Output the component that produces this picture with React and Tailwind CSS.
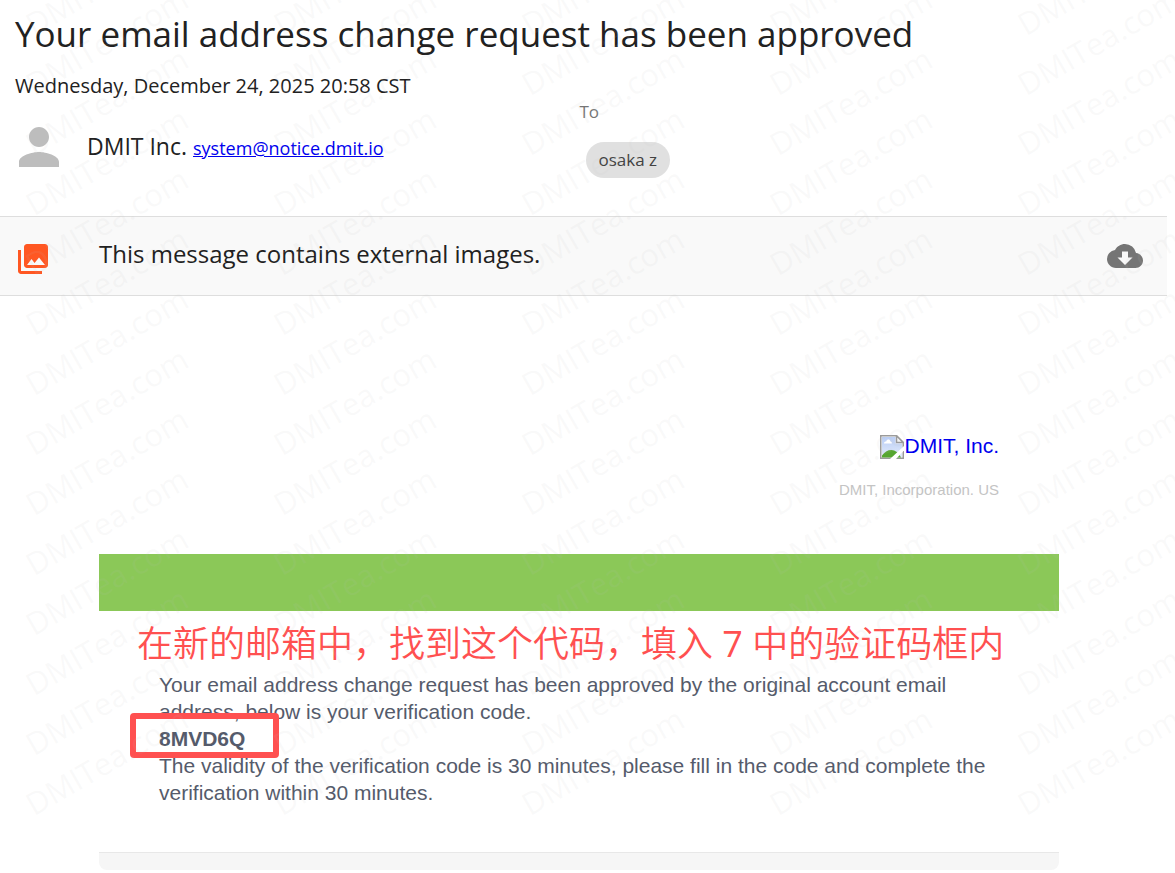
import React from 'react';
import { MdPerson, MdPhotoLibrary, MdCloudDownload } from 'react-icons/md';

const WATERMARK_ROWS = 14;
const WATERMARK_COLS = 5;

function Watermark() {
  return (
    <div aria-hidden="true" className="pointer-events-none absolute inset-0 z-10 overflow-hidden">
      <div className="grid auto-rows-[60px] grid-cols-[repeat(5,248px)] pt-1 pl-9">
        {Array.from({ length: WATERMARK_ROWS * WATERMARK_COLS }, (_, i) => (
          <div key={i} className="flex h-9 items-end">
            <span className="origin-bottom-left -rotate-30 text-[31px] leading-8 font-medium text-[#c0c0c0]/10 select-none">
              DMITea.com
            </span>
          </div>
        ))}
      </div>
    </div>
  );
}

function BrokenImage() {
  return (
    <svg viewBox="0 0 24 24" className="size-6 shrink-0" aria-hidden="true">
      <defs>
        <linearGradient id="sky" x1="0" y1="0" x2="0" y2="1">
          <stop offset="0" stopColor="#b9cdf5" />
          <stop offset="1" stopColor="#e3ebfb" />
        </linearGradient>
      </defs>
      <path d="M0.75 0.75H16.5L23.25 7.5V23.25H0.75Z" fill="#fff" stroke="#9a9a9a" strokeWidth="1.5" />
      <path d="M2 2H15.5V8.5H22V22H2Z" fill="url(#sky)" />
      <path d="M4 8.5C4 6.8 5.6 6.4 6.2 6.6C6.8 4 10 4 10.4 6.4C11.8 6.4 12 7.6 11.8 8.5Z" fill="#fff" />
      <path d="M2 22.5V20.5C4.5 17 7.5 15 11.5 15C15 15 19 18 21 22.5Z" fill="#55a630" />
      <path d="M16.5 0.75V7.5H23.25Z" fill="#f4f4f4" stroke="#9a9a9a" strokeWidth="1.5" />
      <path d="M10 24L24 11V15.5L16 24Z" fill="#fff" />
    </svg>
  );
}

function MessageHeader() {
  return (
    <header className="px-[15px] pt-3">
      <h1 className="text-[35px] leading-[44px]">Your email address change request has been approved</h1>
      <p className="mt-4 text-[20px] leading-7">Wednesday, December 24, 2025 20:58 CST</p>
      <div className="grid grid-cols-2">
        <div className="flex items-center gap-[18px] self-start pt-[17px]">
          <MdPerson className="-ml-1.5 size-[60px] text-[#bdbdbd]" />
          <p className="text-[23px] leading-8">
            DMIT Inc.{' '}
            <a href="mailto:system@notice.dmit.io" className="text-[18px] text-[#0000ee] underline">
              system@notice.dmit.io
            </a>
          </p>
        </div>
        <div className="-ml-2">
          <p className="text-[17px] leading-6 text-[#757575]">To</p>
          <button className="mt-[18px] ml-1.5 h-9 rounded-full bg-[#e0e0e0] px-[13px] text-[17px] text-[#424242]">
            osaka z
          </button>
        </div>
      </div>
    </header>
  );
}

function ExternalImagesBar() {
  return (
    <div className="mt-[38px] mr-2 flex h-20 items-center border-y border-[#dedede] bg-[#f9f9f9] pr-6 pl-[15px]">
      <MdPhotoLibrary className="mt-1.5 size-9 text-[#ff5722]" />
      <p className="mb-1 ml-12 flex-1 text-[24px]">This message contains external images.</p>
      <button aria-label="Load external images">
        <MdCloudDownload className="size-9 text-[#757575]" />
      </button>
    </div>
  );
}

function MessageBody() {
  return (
    <main className="mr-[17px] font-['Liberation_Sans',Arial,sans-serif]">
      <div className="mx-auto max-w-[960px]">
        <div className="flex flex-col items-end px-[60px] pt-[139px]">
          <a href="#" className="flex items-start text-[21px] leading-[22px] text-[#0000ee]">
            <BrokenImage />
            DMIT, Inc.
          </a>
          <p className="mt-[21px] text-[15px] leading-5 text-[#c4c4c4]">DMIT, Incorporation. US</p>
        </div>

        <div className="mt-[54px] h-[57px] bg-[#8bc858]" />

        <p className="h-[60px] pl-[38px] font-['Noto_Sans_CJK_SC',sans-serif] text-[36px] leading-[60px] font-[350] whitespace-nowrap text-[#ff5050]">
          在新的邮箱中，找到这个代码，填入
          <span className="font-['Open_Sans',sans-serif] font-normal"> 7 </span>
          中的验证码框内
        </p>

        <div className="px-[60px] pb-[46px] text-[21px] leading-[27px] text-[#555b6b]">
          <p>Your email address change request has been approved by the original account email address, below is your verification code.</p>
          <p className="relative">
            <strong>8MVD6Q</strong>
            {/* marker drawn round the code */}
            <span className="absolute -top-3 -left-[29px] h-[45px] w-[149px] rounded border-[6px] border-[#ff5050]" />
          </p>
          <p>The validity of the verification code is 30 minutes, please fill in the code and complete the verification within 30 minutes.</p>
        </div>

        <div className="h-[18px] rounded-b-lg border-t border-[#e8e8e8] bg-[#f6f6f6]" />
      </div>
    </main>
  );
}

export default function App() {
  return (
    <div className="relative min-h-screen bg-white font-['Open_Sans',sans-serif] text-[#212121]">
      <MessageHeader />
      <ExternalImagesBar />
      <MessageBody />
      <Watermark />
    </div>
  );
}
